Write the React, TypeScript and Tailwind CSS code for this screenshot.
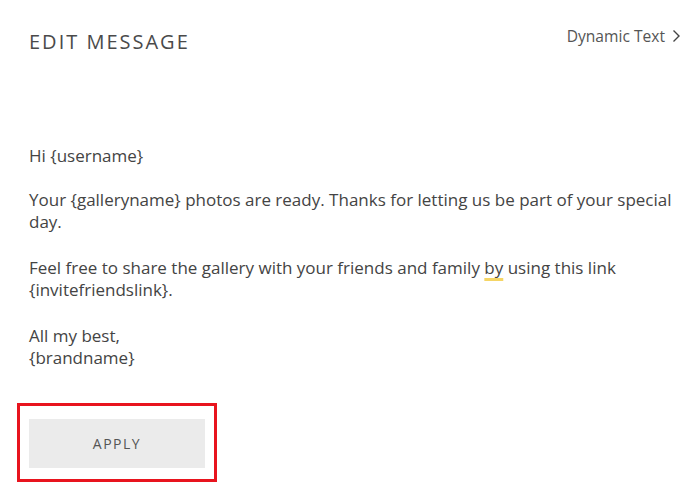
import React from 'react';

const App: React.FC = () => {
  return (
    <div
      className="w-[688px] h-[504px] bg-white text-[#444] flex flex-col"
      style={{ fontFamily: '"Open Sans", "Noto Sans", sans-serif' }}
    >
      <div className="flex items-start justify-between pl-[29px] pr-[7px] pt-[27px]">
        <h1 className="text-[20px] leading-[30px] tracking-[2px] text-[#4a4a4a] font-normal">EDIT MESSAGE</h1>
        <button className="flex items-center gap-[6px] text-[15.6px] leading-[20px] text-[#555] mt-[-1px]">
          Dynamic Text
          <svg width="10" height="14" viewBox="0 0 10 14" fill="none" stroke="#444" strokeWidth="1.4">
            <path d="M2.5 1.5 L8 7 L2.5 12.5" />
          </svg>
        </button>
      </div>

      <div className="pl-[29px] pr-[14px] pt-[88px] text-[17px] leading-[22px]">
        <p>Hi {'{username}'}</p>
        <p className="mt-[22px]">
          Your {'{galleryname}'} photos are ready. Thanks for letting us be part of your special day.
        </p>
        <p className="mt-[24px]">
          Feel free to share the gallery with your friends and family{' '}
          <span className="underline decoration-[#f5d565] decoration-[3px] underline-offset-[4px]">by</span> using this link{' '}
          {'{invitefriendslink}'}.
        </p>
        <p className="mt-[24px]">
          All my best,
          <br />
          {'{brandname}'}
        </p>
      </div>

      <div className="ml-[17px] mt-[34px] w-[200px] border-[3px] border-[#e8141e] px-[9px] pt-[13px] pb-[11px]">
        <button className="w-[176px] h-[49px] bg-[#ebebeb] text-[14px] tracking-[1.5px] text-[#555]">APPLY</button>
      </div>
    </div>
  );
};

export default App;
